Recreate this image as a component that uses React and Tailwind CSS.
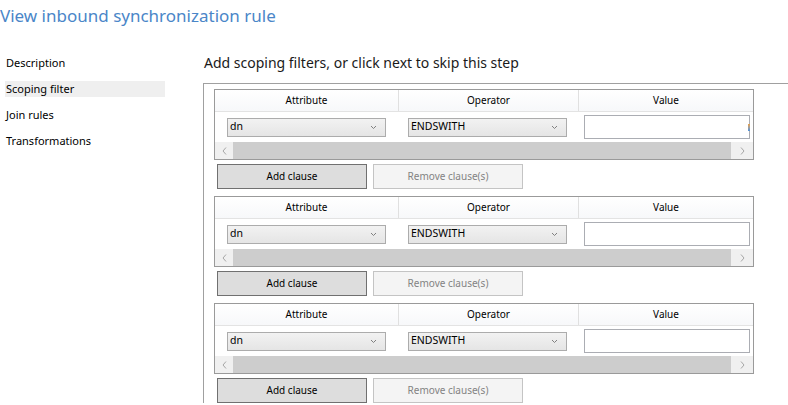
import React from 'react';

const navItems = ['Description', 'Scoping filter', 'Join rules', 'Transformations'];

const Chevron = () => (
  <svg width="7" height="5" viewBox="0 0 7 5" className="shrink-0">
    <path d="M1 1 L3.5 3.5 L6 1" fill="none" stroke="#808080" strokeWidth="1" />
  </svg>
);

const Combo = ({ value }) => (
  <div className="flex h-[19px] w-[159px] items-center justify-between border border-[#acacac] bg-gradient-to-b from-[#f2f2f2] to-[#e5e5e5] pl-[2px] pr-[8px] text-[10.5px] text-black">
    <span>{value}</span>
    <Chevron />
  </div>
);

const ClauseGrid = ({ caret }) => (
  <div className="w-[540px] border border-[#9a9a9a] bg-white">
    {/* Header */}
    <div className="flex h-[22px] border-b border-[#e3e3e3] bg-gradient-to-b from-white to-[#f7f8fa] text-[10px] text-black">
      <div className="flex w-[184px] items-center justify-center border-r border-[#e0e0e0]">Attribute</div>
      <div className="flex w-[180px] items-center justify-center border-r border-[#e0e0e0]">Operator</div>
      <div className="flex flex-1 items-center justify-center">Value</div>
    </div>
    {/* Row */}
    <div className="flex h-[30px] items-center">
      <div className="w-[184px] pl-[12px]">
        <Combo value="dn" />
      </div>
      <div className="w-[180px] pl-[9px]">
        <Combo value="ENDSWITH" />
      </div>
      <div className="flex-1 pl-[5px]">
        <div className="flex h-[24px] w-[166px] items-center justify-end border border-[#abadb3] bg-white">
          {caret && <div className="mr-[-1px] h-[7px] w-[2px] bg-gradient-to-b from-[#e8a040] to-[#4a90d8]" />}
        </div>
      </div>
    </div>
    {/* Horizontal scrollbar */}
    <div className="flex h-[17px] bg-[#f0f0f0]">
      <div className="flex w-[18px] items-center justify-center">
        <svg width="5" height="8" viewBox="0 0 5 8">
          <path d="M4 0.5 L1 4 L4 7.5" fill="none" stroke="#a6a6a6" strokeWidth="1" />
        </svg>
      </div>
      <div className="flex-1 bg-[#cdcdcd]" />
      <div className="flex w-[22px] items-center justify-center">
        <svg width="5" height="8" viewBox="0 0 5 8">
          <path d="M1 0.5 L4 4 L1 7.5" fill="none" stroke="#a6a6a6" strokeWidth="1" />
        </svg>
      </div>
    </div>
  </div>
);

const ClauseBlock = ({ caret }) => (
  <div className="flex flex-col">
    <ClauseGrid caret={caret} />
    <div className="mt-[4px] flex gap-[6px] pl-[3px]">
      <div className="flex h-[25px] w-[150px] items-center justify-center border border-[#707070] bg-[#dddddd] text-[10px] text-black">
        Add clause
      </div>
      <div className="flex h-[25px] w-[150px] items-center justify-center border border-[#c4c4c4] bg-[#f4f4f4] text-[10px] text-[#838383]">
        Remove clause(s)
      </div>
    </div>
  </div>
);

export default function App() {
  return (
    <div
      className="h-[405px] w-[788px] overflow-hidden bg-white"
      style={{ fontFamily: '"Segoe UI", "Noto Sans", "Open Sans", sans-serif' }}
    >
      <div className="pt-[3px] text-[17px] leading-[26px] text-[#4a86c8]">View inbound synchronization rule</div>

      <div className="mt-[24px] flex">
        {/* Left navigation */}
        <nav className="w-[203px] shrink-0 pl-[5px] pt-[2px]">
          {navItems.map((item) => (
            <div
              key={item}
              className={`mb-[10px] flex h-[16px] w-[160px] items-center pl-[1px] text-[11px] text-black ${
                item === 'Scoping filter' ? 'bg-[#efefef]' : ''
              }`}
            >
              {item}
            </div>
          ))}
        </nav>

        {/* Main panel */}
        <main className="flex-1">
          <div className="pl-[1px] text-[14px] leading-[20px] text-[#1a1a1a]">
            Add scoping filters, or click next to skip this step
          </div>
          <div className="mt-[10px] flex flex-col gap-[7px] border-l border-t border-[#a0a0a0] pl-[10px] pt-[5px]">
            <ClauseBlock caret />
            <ClauseBlock />
            <ClauseBlock />
          </div>
        </main>
      </div>
    </div>
  );
}
